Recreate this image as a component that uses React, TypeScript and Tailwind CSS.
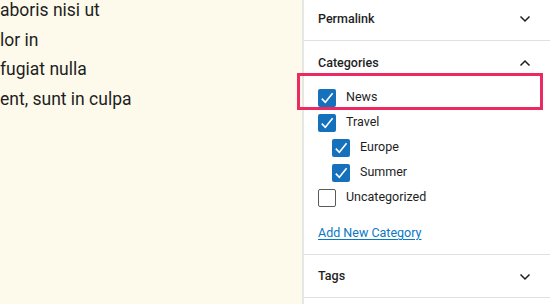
import React from "react";

function Chevron({ up = false }: { up?: boolean }) {
  return (
    <svg width="12" height="8" viewBox="0 0 12 8" className="block">
      <path
        d={up ? "M1.5 6.5 L6 2 L10.5 6.5" : "M1.5 1.5 L6 6 L10.5 1.5"}
        fill="none"
        stroke="#1e1e1e"
        strokeWidth="1.5"
      />
    </svg>
  );
}

function Box({ checked }: { checked: boolean }) {
  if (!checked) {
    return <div className="w-[18px] h-[18px] rounded-[2px] border border-[#5a5a5a] bg-white shrink-0" />;
  }
  return (
    <div className="w-[18px] h-[18px] rounded-[2px] bg-[#1671bd] shrink-0 flex items-center justify-center">
      <svg width="18" height="18" viewBox="0 0 18 18">
        <path d="M3.8 9.6 L7.3 13.3 L14.6 4.2" fill="none" stroke="#fff" strokeWidth="1.6" strokeLinejoin="miter" />
      </svg>
    </div>
  );
}

function Row({ label, checked, indent = false }: { label: string; checked: boolean; indent?: boolean }) {
  return (
    <div className={`h-[25px] flex items-center gap-[10px] ${indent ? "pl-[28px]" : "pl-[14px]"}`}>
      <Box checked={checked} />
      <span className="text-[12.5px] text-[#1e1e1e]">{label}</span>
    </div>
  );
}

export default function App() {
  return (
    <div
      className="relative w-[550px] h-[304px] overflow-hidden flex bg-white"
      style={{ fontFamily: 'Roboto, "Liberation Sans", Arial, sans-serif' }}
    >
      <div className="w-[302px] h-full bg-[#fdfaec] shrink-0">
        <div className="-mt-[4px] text-[17.5px] leading-[29.7px] text-[#1e1e1e] whitespace-nowrap">
          <div>aboris nisi ut</div>
          <div>lor in</div>
          <div>fugiat nulla</div>
          <div>ent, sunt in culpa</div>
        </div>
      </div>
      <div className="w-[2px] h-full bg-[#e6e6e4] shrink-0" />
      <div className="flex-1 flex flex-col">
        <div className="h-[41px] flex items-center justify-between pl-[14px] pr-[19px] pb-[2px] border-b border-[#e0e0e0]">
          <span className="text-[12.5px] font-medium text-[#1e1e1e]">Permalink</span>
          <Chevron />
        </div>
        <div className="border-b border-[#e0e0e0]">
          <div className="h-[44px] flex items-center justify-between pl-[14px] pr-[19px]">
            <span className="text-[12.5px] font-medium text-[#1e1e1e]">Categories</span>
            <Chevron up />
          </div>
          <Row label="News" checked />
          <Row label="Travel" checked />
          <Row label="Europe" checked indent />
          <Row label="Summer" checked indent />
          <Row label="Uncategorized" checked={false} />
          <div className="pt-[14px] pb-[13px] pl-[14px] leading-[16px]">
            <a href="#" className="text-[12.5px] text-[#0a77c2] underline underline-offset-2">
              Add New Category
            </a>
          </div>
        </div>
        <div className="h-[43px] flex items-center justify-between pl-[14px] pr-[19px] pt-[1px] border-b border-[#e0e0e0]">
          <span className="text-[12.5px] font-medium text-[#1e1e1e]">Tags</span>
          <Chevron />
        </div>
      </div>
      <div className="absolute left-[297px] top-[73px] w-[246px] h-[37px] border-[3px] border-[#ec2a62]" />
    </div>
  );
}
